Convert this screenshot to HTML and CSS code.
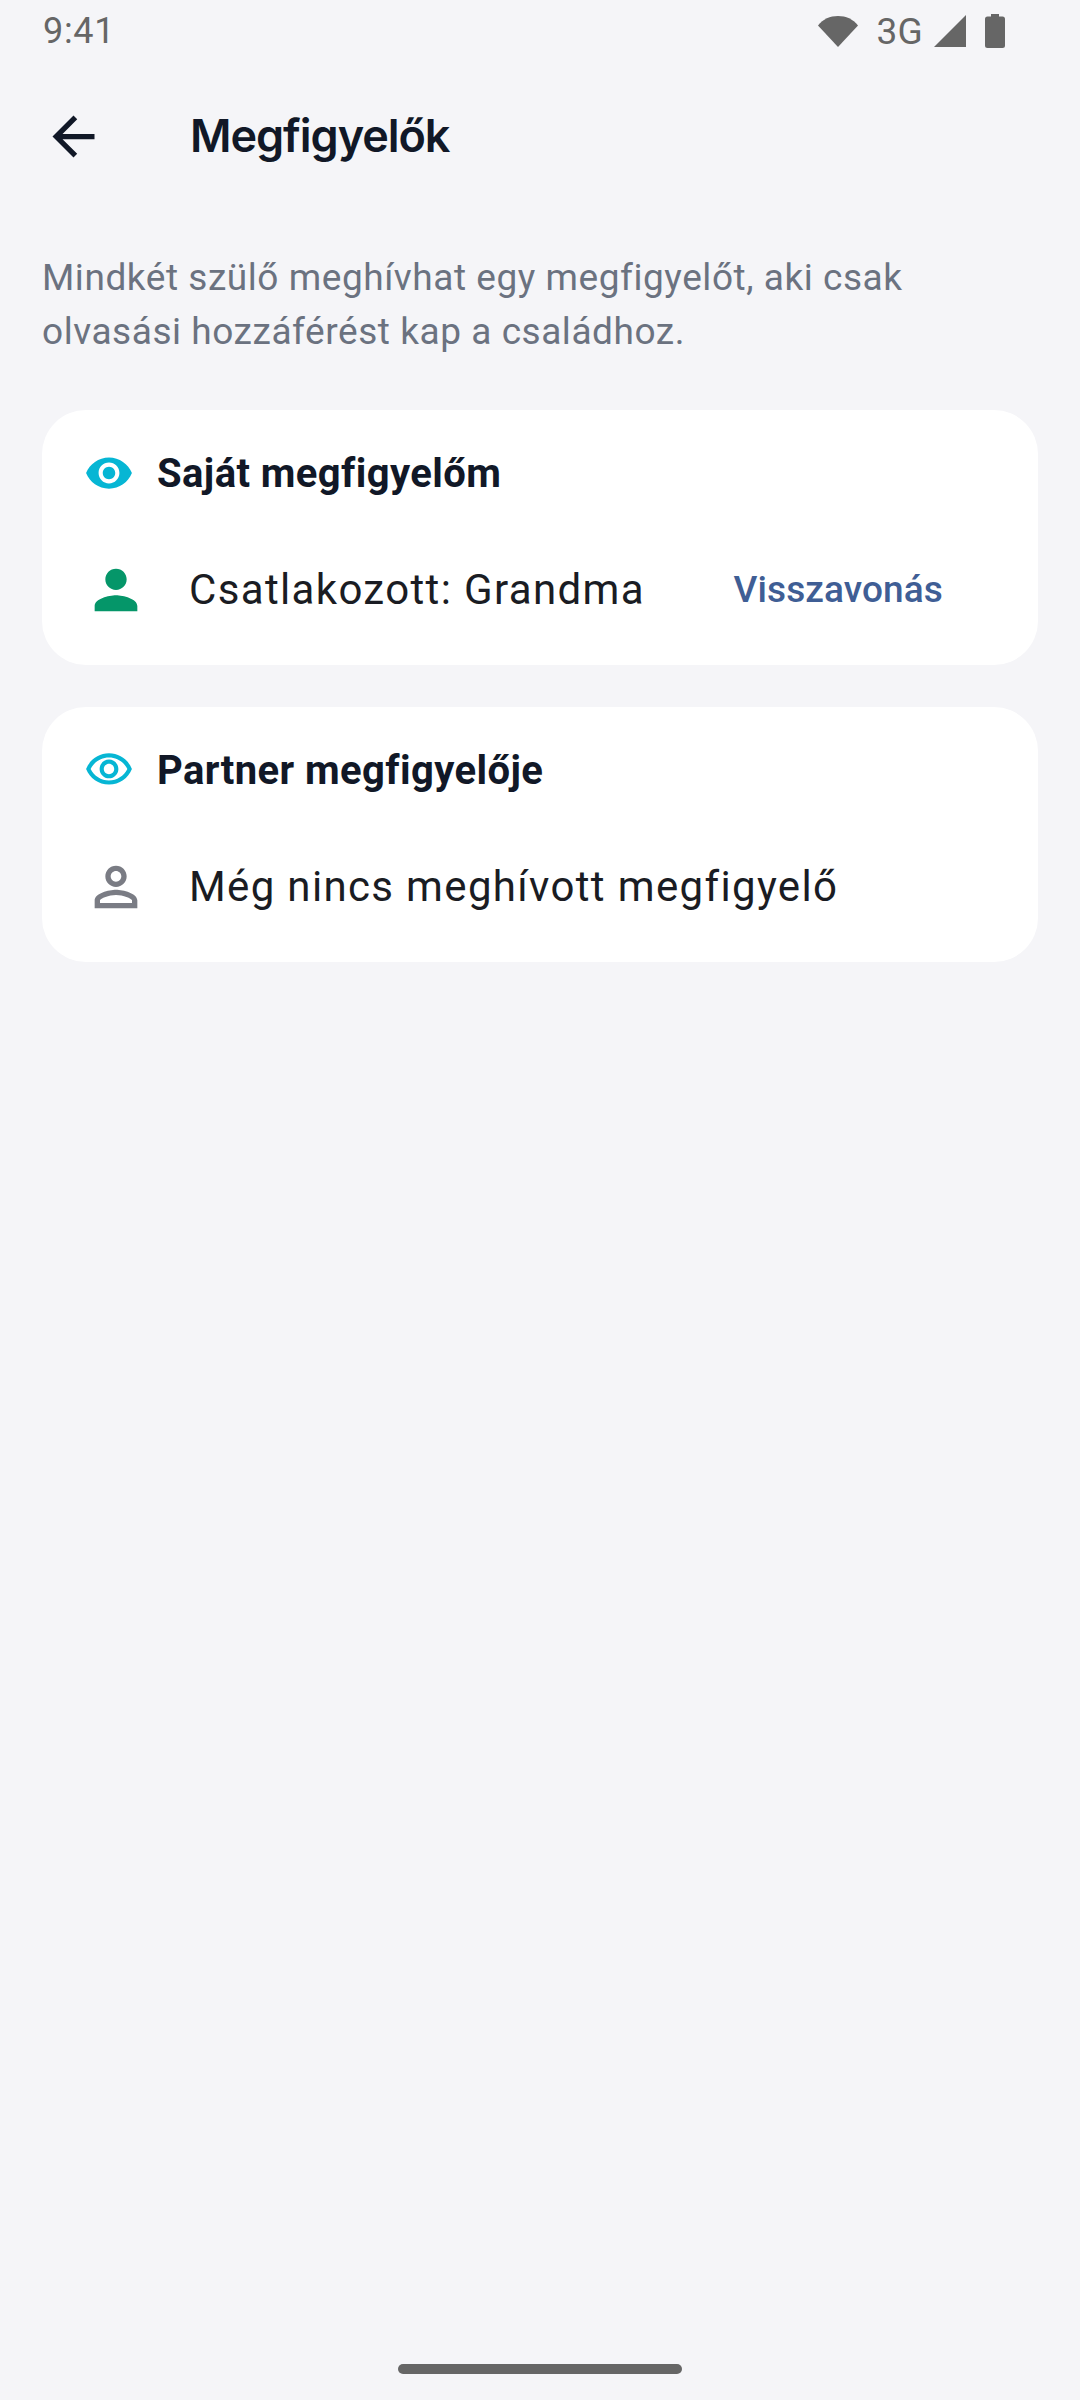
FILE: index.html
```html
<!DOCTYPE html>
<html lang="hu">

<head>
    <meta charset="UTF-8">
    <title>Megfigyelők</title>
    <meta name="viewport" content="width=device-width, initial-scale=1">
    <link rel="stylesheet" href="styles.css">
</head>

<body>
    <div class="status">
        <span class="status__time">9:41</span>
        <div class="status__icons">
            <svg class="status__wifi" viewBox="0 0 40 32" width="40" height="32">
                <path d="M0 10.500C5 4 12 1 20 1s15 3 20 9.500L20 32z" fill="currentColor" />
            </svg>
            <span class="status__net">3G</span>
            <svg class="status__signal" viewBox="0 0 32 32" width="32" height="32">
                <path d="M32 0v32H0z" fill="currentColor" />
            </svg>
            <svg class="status__battery" viewBox="0 0 20 34" width="20" height="34">
                <path d="M6 0h8v2.500h3.500a2.500 2.500 0 0 1 2.500 2.500v26.500a2.500 2.500 0 0 1-2.500 2.500h-15A2.500 2.500 0 0 1 0 31.500V5a2.500 2.500 0 0 1 2.500-2.500H6z" fill="currentColor" />
            </svg>
        </div>
    </div>

    <header class="appbar">
        <button class="appbar__back" type="button" aria-label="Vissza">
            <svg viewBox="0 0 24 24" width="63" height="63">
                <path d="M20 11H7.830l5.590-5.590L12 4l-8 8 8 8 1.410-1.410L7.830 13H20z" fill="currentColor" />
            </svg>
        </button>
        <h1 class="appbar__title">Megfigyelők</h1>
    </header>

    <main class="content">
        <p class="intro">Mindkét szülő meghívhat egy megfigyelőt, aki csak olvasási hozzáférést kap a családhoz.</p>

        <section class="card">
            <div class="card__head">
                <svg class="card__eye" viewBox="0 0 24 24" width="50" height="50">
                    <path d="M12 4.500C7 4.500 2.730 7.610 1 12c1.730 4.390 6 7.500 11 7.500s9.270-3.110 11-7.500c-1.730-4.390-6-7.500-11-7.500zM12 17c-2.760 0-5-2.240-5-5s2.240-5 5-5 5 2.240 5 5-2.240 5-5 5zm0-8c-1.660 0-3 1.340-3 3s1.340 3 3 3 3-1.340 3-3-1.340-3-3-3z" fill="currentColor" />
                </svg>
                <h2 class="card__title">Saját megfigyelőm</h2>
            </div>
            <div class="card__row">
                <svg class="card__person card__person--on" viewBox="0 0 24 24" width="64" height="64">
                    <path d="M12 12c2.210 0 4-1.790 4-4s-1.790-4-4-4-4 1.790-4 4 1.790 4 4 4zm0 2c-2.670 0-8 1.340-8 4v2h16v-2c0-2.660-5.330-4-8-4z" fill="currentColor" />
                </svg>
                <span class="card__text">Csatlakozott: Grandma</span>
                <button class="card__action" type="button">Visszavonás</button>
            </div>
        </section>

        <section class="card">
            <div class="card__head">
                <svg class="card__eye" viewBox="0 0 24 24" width="50" height="50">
                    <path d="M12 6c3.790 0 7.170 2.130 8.820 5.500C19.170 14.870 15.790 17 12 17s-7.170-2.130-8.820-5.500C4.830 8.130 8.210 6 12 6m0-2C7 4 2.730 7.110 1 11.500 2.730 15.890 7 19 12 19s9.270-3.110 11-7.500C21.270 7.110 17 4 12 4zm0 5c1.380 0 2.500 1.120 2.500 2.500S13.380 14 12 14s-2.500-1.120-2.500-2.500S10.620 9 12 9m0-2c-2.480 0-4.500 2.020-4.500 4.500S9.520 16 12 16s4.500-2.020 4.500-4.500S14.480 7 12 7z" fill="currentColor" />
                </svg>
                <h2 class="card__title">Partner megfigyelője</h2>
            </div>
            <div class="card__row">
                <svg class="card__person" viewBox="0 0 24 24" width="64" height="64">
                    <path d="M12 6c1.100 0 2 .9 2 2s-.9 2-2 2-2-.9-2-2 .9-2 2-2m0 9c2.700 0 5.800 1.290 6 2v1H6v-.99c.2-.72 3.300-2.010 6-2.010m0-11C9.790 4 8 5.790 8 8s1.790 4 4 4 4-1.790 4-4-1.790-4-4-4zm0 9c-2.670 0-8 1.340-8 4v3h16v-3c0-2.660-5.330-4-8-4z" fill="currentColor" />
                </svg>
                <span class="card__text">Még nincs meghívott megfigyelő</span>
            </div>
        </section>
    </main>

    <div class="home"><span class="home__bar"></span></div>
</body>

</html>
```

FILE: styles.css
```css
* {
    border: 0;
    box-sizing: border-box;
    margin: 0;
    padding: 0;
}

:root {
    --bg: #f5f5f8;
    --fg: #111827;
    --muted: #6b7280;
    --status: #666666;
    --cyan: #06b6d4;
    --green: #059669;
    --link: #3f5e95;
}

body {
    background: var(--bg);
    color: var(--fg);
    display: flex;
    flex-direction: column;
    font-family: Roboto, sans-serif;
    height: 2400px;
    overflow: hidden;
}

/* Status bar */
.status {
    align-items: center;
    color: var(--status);
    display: flex;
    height: 62px;
    justify-content: space-between;
    padding: 0 75px 0 43px;
}

.status__time {
    font-size: 36px;
    letter-spacing: 0.7px;
}

.status__icons {
    align-items: center;
    display: flex;
}

.status__net {
    font-size: 37px;
    letter-spacing: 0.3px;
    margin: 0 11px 0 18px;
}

.status__battery {
    margin-left: 19px;
}

/* App bar */
.appbar {
    align-items: center;
    display: flex;
    height: 148px;
    padding-left: 42px;
}

.appbar__back {
    background: transparent;
    color: var(--fg);
    display: flex;
}

.appbar__title {
    font: 600 45px/1.2 Inter, sans-serif;
    letter-spacing: -1.05px;
    margin-left: 85px;
}

/* Page content */
.content {
    display: flex;
    flex-direction: column;
    gap: 42px;
    padding: 41px 42px 0;
}

.intro {
    color: var(--muted);
    font-size: 37px;
    letter-spacing: 0.55px;
    line-height: 54px;
    margin-bottom: 9px;
}

.card {
    background: #fff;
    border-radius: 44px;
    display: flex;
    flex-direction: column;
    padding: 38px 44px 43px 42px;
}

.card__head {
    align-items: center;
    display: flex;
    gap: 23px;
}

.card__eye {
    color: var(--cyan);
    flex-shrink: 0;
}

.card__title {
    font: 700 40px/48px Roboto, sans-serif;
    letter-spacing: 0.4px;
    padding-top: 2px;
}

.card__row {
    align-items: center;
    display: flex;
    margin-top: 60px;
}

.card__person {
    color: #7a7c84;
    flex-shrink: 0;
}

.card__person--on {
    color: var(--green);
}

.card__text {
    color: #1a1c23;
    font-size: 42px;
    letter-spacing: 1.35px;
    margin: 0 0 2px 41px;
}

.card__action {
    background: transparent;
    color: var(--link);
    font: 500 37px/1 Roboto, sans-serif;
    letter-spacing: 0.1px;
    margin: 0 51px 2px auto;
}

/* Gesture bar */
.home {
    display: flex;
    justify-content: center;
    margin-top: auto;
    padding-bottom: 26px;
}

.home__bar {
    background: #666;
    border-radius: 5px;
    height: 10px;
    width: 284px;
}
```
